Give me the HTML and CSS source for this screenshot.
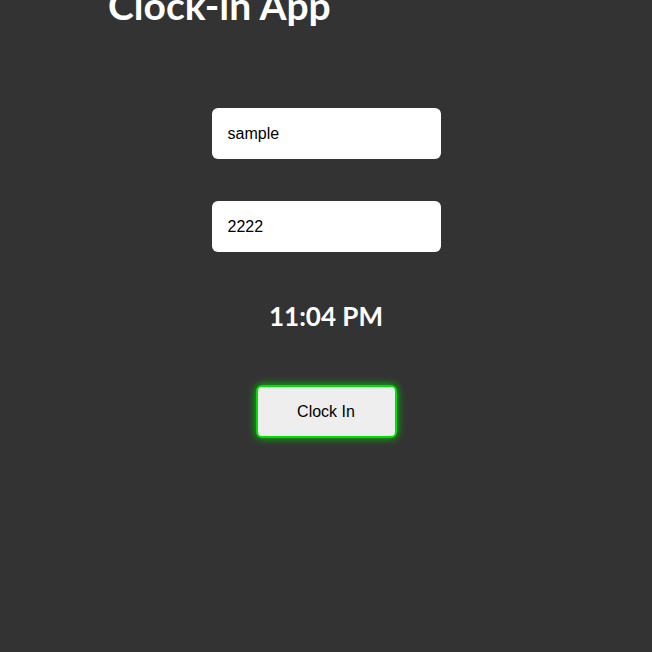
FILE: index.html
```html
<!DOCTYPE html>
<html>
<head>
<meta charset="utf-8">
<link rel="stylesheet" href="styles.css">
</head>
<body>
<h1 class="title">Clock-in App</h1>
<main class="form">
  <input class="field" type="text" value="sample">
  <input class="field" type="text" value="2222">
  <div class="time">11:04 PM</div>
  <button class="btn">Clock In</button>
</main>
</body>
</html>
```
FILE: styles.css
```css
html, body {
  margin: 0;
  padding: 0;
  background: #333333;
  height: 100%;
  overflow: hidden;
}
.title {
  margin: -15px 0 0 108px;
  font-family: "Lato", "Open Sans", sans-serif;
  font-weight: 700;
  font-size: 39px;
  line-height: 40px;
  color: #ffffff;
}
.form {
  display: flex;
  flex-direction: column;
  align-items: center;
  margin-top: 83px;
}
.field {
  box-sizing: border-box;
  width: 229px;
  height: 51px;
  border: none;
  border-radius: 6px;
  background: #ffffff;
  padding: 0 16px;
  font-family: "Liberation Sans", Arial, sans-serif;
  font-size: 16px;
  color: #000;
  margin-bottom: 42px;
  outline: none;
}
.time {
  margin-top: 5px;
  font-family: "Lato", "Open Sans", sans-serif;
  font-weight: 700;
  font-size: 26px;
  line-height: 34px;
  color: #ffffff;
}
.btn {
  box-sizing: border-box;
  margin-top: 52px;
  width: 141px;
  height: 53px;
  background: #eeeeee;
  border: 2px solid #00e000;
  border-radius: 6px;
  box-shadow: 0 0 8px #00cc00;
  font-family: "Liberation Sans", Arial, sans-serif;
  font-size: 16px;
  color: #000;
}
```
